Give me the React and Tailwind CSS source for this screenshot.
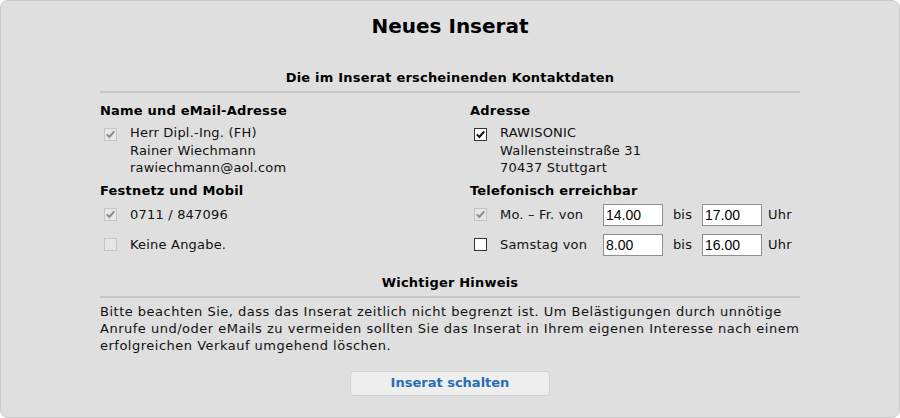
const font = { fontFamily: '"DejaVu Sans", Verdana, sans-serif' };

const Check = ({ checked, disabled }) => (
  <span
    className={
      "inline-flex h-[13px] w-[13px] shrink-0 items-center justify-center border " +
      (disabled ? "border-[#c4c4c4] bg-[#e6e6e6]" : "border-[#333] bg-white")
    }
  >
    {checked && (
      <svg width="11" height="11" viewBox="0 0 11 11">
        <path
          d="M1.8 5.4 L4.4 8 L9.2 2.4"
          fill="none"
          stroke={disabled ? "#8a8a8a" : "#111"}
          strokeWidth="2"
        />
      </svg>
    )}
  </span>
);

const TimeInput = ({ value }) => (
  <input
    readOnly
    value={value}
    className="h-[22px] w-[60px] border border-[#8f8f8f] bg-white px-[2px] text-[14px] tracking-normal text-black outline-none"
    style={{ fontFamily: '"Liberation Sans", Arial, sans-serif' }}
  />
);

export default function App() {
  return (
    <div className="h-[418px] w-[900px] bg-white" style={font}>
      <div className="flex h-full flex-col rounded-[8px] border border-[#c9c9c9] bg-[#dfdfdf] text-[13px] tracking-[0.2px] text-[#111]">
        <h1 className="mt-[13px] text-center text-[20px] font-bold leading-[24px] tracking-normal text-black">
          Neues Inserat
        </h1>

        <div className="mx-[99px] mt-[31px]">
          <h2 className="border-b-2 border-[#c6c6c6] pb-[5px] text-center font-bold leading-[17px] tracking-[0.2px] text-black">
            Die im Inserat erscheinenden Kontaktdaten
          </h2>

          <div className="mt-[9px] grid grid-cols-[370px_1fr]">
            {/* left column */}
            <div>
              <h3 className="font-bold leading-[17px] tracking-[0.2px] text-black">Name und eMail-Adresse</h3>
              <div className="mt-[5px] flex gap-[13px] pl-[4px]">
                <div className="pt-[2px]">
                  <Check checked disabled />
                </div>
                <div className="leading-[17.5px]">
                  <div>Herr Dipl.-Ing. (FH)</div>
                  <div>Rainer Wiechmann</div>
                  <div>rawiechmann@aol.com</div>
                </div>
              </div>

              <h3 className="mt-[5px] font-bold leading-[17px] tracking-[0.2px] text-black">Festnetz und Mobil</h3>
              <div className="mt-[5px] flex h-[22px] items-center gap-[13px] pl-[4px]">
                <Check checked disabled />
                <span>0711 / 847096</span>
              </div>
              <div className="mt-[8px] flex h-[22px] items-center gap-[13px] pl-[4px]">
                <Check disabled />
                <span>Keine Angabe.</span>
              </div>
            </div>

            {/* right column */}
            <div>
              <h3 className="font-bold leading-[17px] tracking-[0.2px] text-black">Adresse</h3>
              <div className="mt-[5px] flex gap-[13px] pl-[4px]">
                <div className="pt-[2px]">
                  <Check checked />
                </div>
                <div className="leading-[17.5px]">
                  <div>RAWISONIC</div>
                  <div>Wallensteinstraße 31</div>
                  <div>70437 Stuttgart</div>
                </div>
              </div>

              <h3 className="mt-[5px] font-bold leading-[17px] tracking-[0.2px] text-black">Telefonisch erreichbar</h3>
              <div className="mt-[5px] flex h-[22px] items-center pl-[4px]">
                <Check checked disabled />
                <span className="ml-[13px] w-[103px]">Mo. – Fr. von</span>
                <TimeInput value="14.00" />
                <span className="w-[39px] text-center">bis</span>
                <TimeInput value="17.00" />
                <span className="ml-[6px]">Uhr</span>
              </div>
              <div className="mt-[8px] flex h-[22px] items-center pl-[4px]">
                <Check />
                <span className="ml-[13px] w-[103px]">Samstag von</span>
                <TimeInput value="8.00" />
                <span className="w-[39px] text-center">bis</span>
                <TimeInput value="16.00" />
                <span className="ml-[6px]">Uhr</span>
              </div>
            </div>
          </div>

          <h2 className="mt-[18px] border-b-2 border-[#c6c6c6] pb-[5px] text-center font-bold leading-[17px] tracking-[0.2px] text-black">
            Wichtiger Hinweis
          </h2>
          <p className="mt-[5px] whitespace-nowrap leading-[17px] tracking-[0.5px]">
            Bitte beachten Sie, dass das Inserat zeitlich nicht begrenzt ist. Um Belästigungen durch unnötige
            <br />
            Anrufe und/oder eMails zu vermeiden sollten Sie das Inserat in Ihrem eigenen Interesse nach einem
            <br />
            erfolgreichen Verkauf umgehend löschen.
          </p>
        </div>

        <div className="mt-[17px] flex justify-center">
          <button className="h-[25px] w-[200px] rounded-[4px] border border-[#d2d2d2] bg-[#eeeeee] text-[13px] font-bold tracking-normal text-[#2a6db5]">
            Inserat schalten
          </button>
        </div>
      </div>
    </div>
  );
}
